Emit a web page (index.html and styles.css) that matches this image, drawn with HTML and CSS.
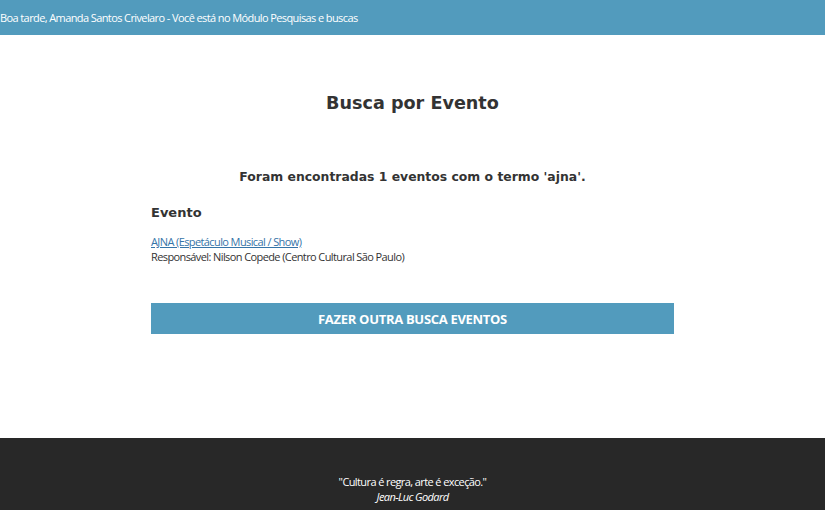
FILE: index.html
```html
<!DOCTYPE html>
<html lang="pt-BR">
<head>
<meta charset="utf-8">
<title>Busca por Evento</title>
<link rel="stylesheet" href="styles.css">
</head>
<body>
<header class="topbar">
  <p class="greeting">Boa tarde, Amanda Santos Crivelaro - Você está no Módulo Pesquisas e buscas</p>
</header>
<main class="content">
  <h1 class="page-title">Busca por Evento</h1>
  <h2 class="result-count">Foram encontradas 1 eventos com o termo 'ajna'.</h2>
  <section class="events">
    <h3 class="events-title">Evento</h3>
    <div class="event">
      <a class="event-link" href="#">AJNA (Espetáculo Musical / Show)</a>
      <p class="event-owner">Responsável: Nilson Copede (Centro Cultural São Paulo)</p>
    </div>
  </section>
  <a class="btn-search" href="#">Fazer outra busca eventos</a>
</main>
<footer class="footer">
  <p class="quote">"Cultura é regra, arte é exceção."</p>
  <p class="author">Jean-Luc Godard</p>
</footer>
</body>
</html>
```
FILE: styles.css
```css
* { box-sizing: border-box; }
html, body { margin: 0; padding: 0; }
body {
  font-family: "Open Sans", "Liberation Sans", sans-serif;
  font-size: 11px;
  letter-spacing: -0.6px;
  color: #333;
  background: #fff;
  width: 825px;
  height: 510px;
  display: flex;
  flex-direction: column;
}
.topbar {
  background: #529bbd;
  height: 35px;
  display: flex;
  align-items: center;
}
.greeting {
  margin: 0;
  color: #fff;
}
.content {
  width: 523px;
  margin: 0 auto;
  flex: 1;
  display: flex;
  flex-direction: column;
}
.page-title {
  font-family: "DejaVu Sans", sans-serif;
  font-weight: bold;
  font-size: 17.6px;
  letter-spacing: 0;
  text-align: center;
  margin: 56px 0 0;
  line-height: 24px;
  color: #333;
}
.result-count {
  font-family: "DejaVu Sans", sans-serif;
  font-weight: bold;
  font-size: 12.4px;
  letter-spacing: 0;
  text-align: center;
  margin: 53px 0 0;
  line-height: 18px;
  color: #333;
}
.events-title {
  font-family: "DejaVu Sans", sans-serif;
  font-weight: bold;
  font-size: 13px;
  letter-spacing: 0;
  margin: 18px 0 0;
  line-height: 18px;
}
.event { margin-top: 12px; line-height: 15px; }
.event-link { color: #3574a8; text-decoration: underline; }
.event-owner { margin: 0; }
.btn-search {
  margin-top: 39px;
  height: 31px;
  background: #529bbd;
  color: #fff;
  font-weight: bold;
  font-size: 13px;
  letter-spacing: -0.3px;
  text-transform: uppercase;
  text-decoration: none;
  display: flex;
  align-items: center;
  justify-content: center;
}
.footer {
  background: #282828;
  height: 72px;
  color: #fff;
  text-align: center;
  padding-top: 36px;
  line-height: 15px;
}
.quote, .author { margin: 0; }
.author { font-style: italic; }
```
